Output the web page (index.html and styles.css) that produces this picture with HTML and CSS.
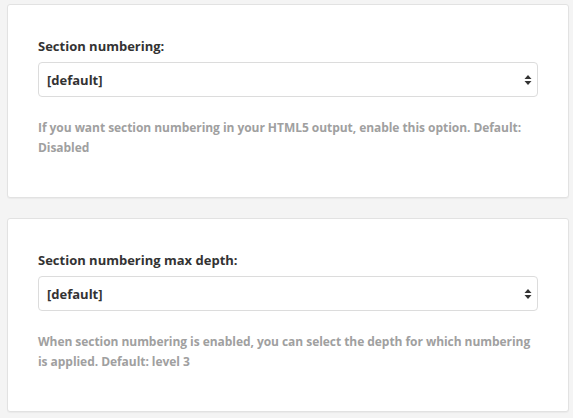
FILE: index.html
```html
<!DOCTYPE html>
<html lang="en">
<head>
    <meta charset="UTF-8">
    <title>Section numbering</title>
    <link rel="stylesheet" href="styles.css">
</head>
<body>
    <div class="panel">
        <label class="field-label">Section numbering:</label>
        <div class="select">
            <span>[default]</span>
            <svg class="arrows" width="8" height="12" viewBox="0 0 8 12"><path d="M4 1 L7.5 5 H0.5 Z M4 11 L7.5 7 H0.5 Z" fill="#333"/></svg>
        </div>
        <p class="help">If you want section numbering in your HTML5 output, enable this option. Default: Disabled</p>
    </div>

    <div class="panel">
        <label class="field-label">Section numbering max depth:</label>
        <div class="select">
            <span>[default]</span>
            <svg class="arrows" width="8" height="12" viewBox="0 0 8 12"><path d="M4 1 L7.5 5 H0.5 Z M4 11 L7.5 7 H0.5 Z" fill="#333"/></svg>
        </div>
        <p class="help">When section numbering is enabled, you can select the depth for which numbering is applied. Default: level 3</p>
    </div>
</body>
</html>
```

FILE: styles.css
```css
/* Options form panels */
body {
    font-family: "Open Sans", "Liberation Sans", sans-serif;
    background-color: #f4f4f4;
    margin: 0;
    padding: 4px 4px 0 7px;
}

.panel {
    background-color: white;
    border: 1px solid #e2e2e2;
    border-radius: 3px;
    box-shadow: 0 1px 1px rgba(0, 0, 0, 0.04);
    padding: 31px 30px 30px;
    margin-bottom: 20px;
}

.field-label {
    display: block;
    font-size: 13px;
    font-weight: 700;
    color: #333;
    line-height: 20px;
    margin-bottom: 6px;
}

.select {
    display: flex;
    align-items: center;
    justify-content: space-between;
    height: 33px;
    border: 1px solid #dcdcdc;
    border-radius: 4px;
    padding: 0 5px 0 8px;
    font-size: 13px;
    font-weight: 700;
    color: #333;
}

.arrows {
    display: block;
}

.help {
    font-size: 12px;
    font-weight: 700;
    letter-spacing: -0.05px;
    color: #a0a0a0;
    line-height: 19.5px;
    margin: 21px 0 10px;
}
```
